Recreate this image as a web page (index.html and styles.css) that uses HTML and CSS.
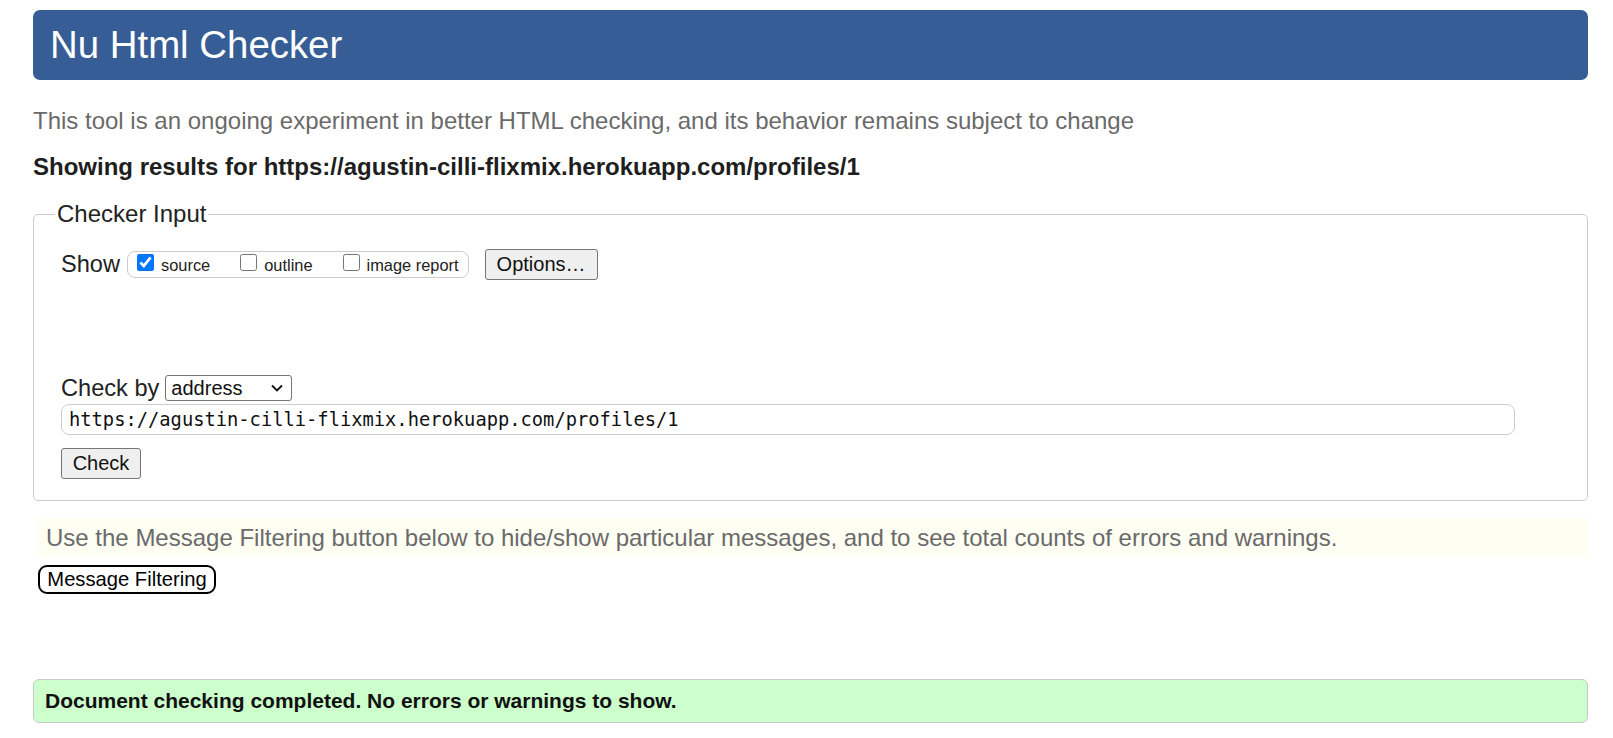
FILE: index.html
```html
<!DOCTYPE html>
<html lang="en">
<head>
<meta charset="utf-8">
<title>Nu Html Checker</title>
<link rel="stylesheet" href="styles.css">
</head>
<body>
<h1 class="title">Nu Html Checker</h1>
<p class="intro">This tool is an ongoing experiment in better HTML checking, and its behavior remains subject to change</p>
<p class="showing">Showing results for https://agustin-cilli-flixmix.herokuapp.com/profiles/1</p>
<fieldset class="checker">
  <legend class="legend">Checker Input</legend>
  <div class="show-row">
    <span class="lbl">Show</span>
    <span class="opts"><label class="opt"><input class="cb" type="checkbox" checked>source</label><label class="opt"><input class="cb" type="checkbox">outline</label><label class="opt"><input class="cb" type="checkbox">image report</label></span>
    <button class="btn options" type="button">Options…</button>
  </div>
  <div class="checkby-row">
    <span class="lbl">Check by</span>
    <span class="select"><span class="select-text">address</span><svg class="chev" width="12" height="8" viewBox="0 0 12 8"><path d="M1 1.5 L6 6.5 L11 1.5" fill="none" stroke="#111" stroke-width="1.8"/></svg></span>
  </div>
  <div class="url">https://agustin-cilli-flixmix.herokuapp.com/profiles/1</div>
  <button class="btn check" type="button">Check</button>
</fieldset>
<p class="notice">Use the Message Filtering button below to hide/show particular messages, and to see total counts of errors and warnings.</p>
<button class="filter-btn" type="button">Message Filtering</button>
<div class="success">Document checking completed. No errors or warnings to show.</div>
</body>
</html>
```

FILE: styles.css
```css
html, body {
  background: #ffffff;
}
body {
  margin: 0 25px 0 33px;
  font-family: "Liberation Sans", Arial, sans-serif;
  color: #222;
}
.title {
  margin: 10px 0 0;
  height: 70px;
  padding: 0 17px;
  background: #365d95;
  color: #ffffff;
  font-size: 38.4px;
  font-weight: normal;
  line-height: 70px;
  border-radius: 7px;
}
.intro {
  margin: 27px 0 0;
  font-size: 24px;
  line-height: 28px;
  color: #6a6a6a;
}
.showing {
  margin: 18px 0 0;
  font-size: 24px;
  line-height: 28px;
  font-weight: bold;
  color: #1e1e1e;
}
.checker {
  margin: 19px 0 0;
  padding: 21px 0 21px 27px;
  border: 1px solid #cccccc;
  border-radius: 5px;
  min-width: 0;
}
.legend {
  margin-left: -6px;
  padding: 0 2px;
  font-size: 24px;
  line-height: 28px;
  color: #222;
}
.lbl {
  font-size: 23.6px;
  color: #222;
}
.show-row {
  display: flex;
  align-items: center;
  height: 31px;
}
.show-row .lbl {
  margin-right: 7px;
}
.opts {
  display: block;
  box-sizing: border-box;
  height: 27px;
  padding: 2px 9px 0 9px;
  border: 1px solid #cccccc;
  border-radius: 8px;
  font-size: 16.4px;
  line-height: 23px;
  color: #222;
  white-space: nowrap;
}
.opt + .opt {
  margin-left: 30px;
}
.cb {
  width: 17px;
  height: 17px;
  margin: 0 7px 1px 0;
  vertical-align: baseline;
  accent-color: #0075ff;
}
.btn {
  box-sizing: border-box;
  height: 31px;
  padding: 0;
  border: 1px solid #767676;
  border-radius: 3px;
  background: #efefef;
  font-family: "Liberation Sans", Arial, sans-serif;
  font-size: 20px;
  color: #111;
}
.options {
  width: 113px;
  margin-left: 16px;
}
.checkby-row {
  display: flex;
  align-items: center;
  height: 26px;
  margin-top: 95px;
}
.checkby-row .lbl {
  margin-right: 6px;
}
.select {
  box-sizing: border-box;
  display: flex;
  align-items: center;
  justify-content: space-between;
  width: 127px;
  height: 26px;
  padding: 0 8px 0 5px;
  border: 1px solid #767676;
  border-radius: 3px;
  font-size: 20px;
  color: #111;
}
.chev {
  display: block;
}
.url {
  box-sizing: border-box;
  width: 1454px;
  height: 31px;
  margin-top: 3px;
  padding: 0 7px;
  border: 1px solid #cccccc;
  border-radius: 8px;
  font-family: "DejaVu Sans Mono", "Liberation Mono", monospace;
  font-size: 18.75px;
  line-height: 29px;
  color: #111;
  white-space: nowrap;
}
.check {
  display: block;
  width: 80px;
  margin-top: 13px;
}
.notice {
  margin: 17px 0 0 5px;
  height: 39px;
  padding: 0 8px;
  background: #fefef3;
  font-size: 24px;
  line-height: 39px;
  color: #6a6a6a;
}
.filter-btn {
  display: block;
  box-sizing: border-box;
  width: 178px;
  height: 29px;
  margin: 8px 0 0 5px;
  padding: 0;
  border: 2.5px solid #000;
  border-radius: 9px;
  background: #ffffff;
  font-family: "Liberation Sans", Arial, sans-serif;
  font-size: 20.2px;
  color: #000;
}
.success {
  box-sizing: border-box;
  height: 44px;
  margin-top: 85px;
  padding: 0 11px;
  border: 1px solid #c8c8c8;
  border-radius: 6px;
  background: #ccffcc;
  font-size: 21px;
  font-weight: bold;
  line-height: 42px;
  color: #111;
}
```
